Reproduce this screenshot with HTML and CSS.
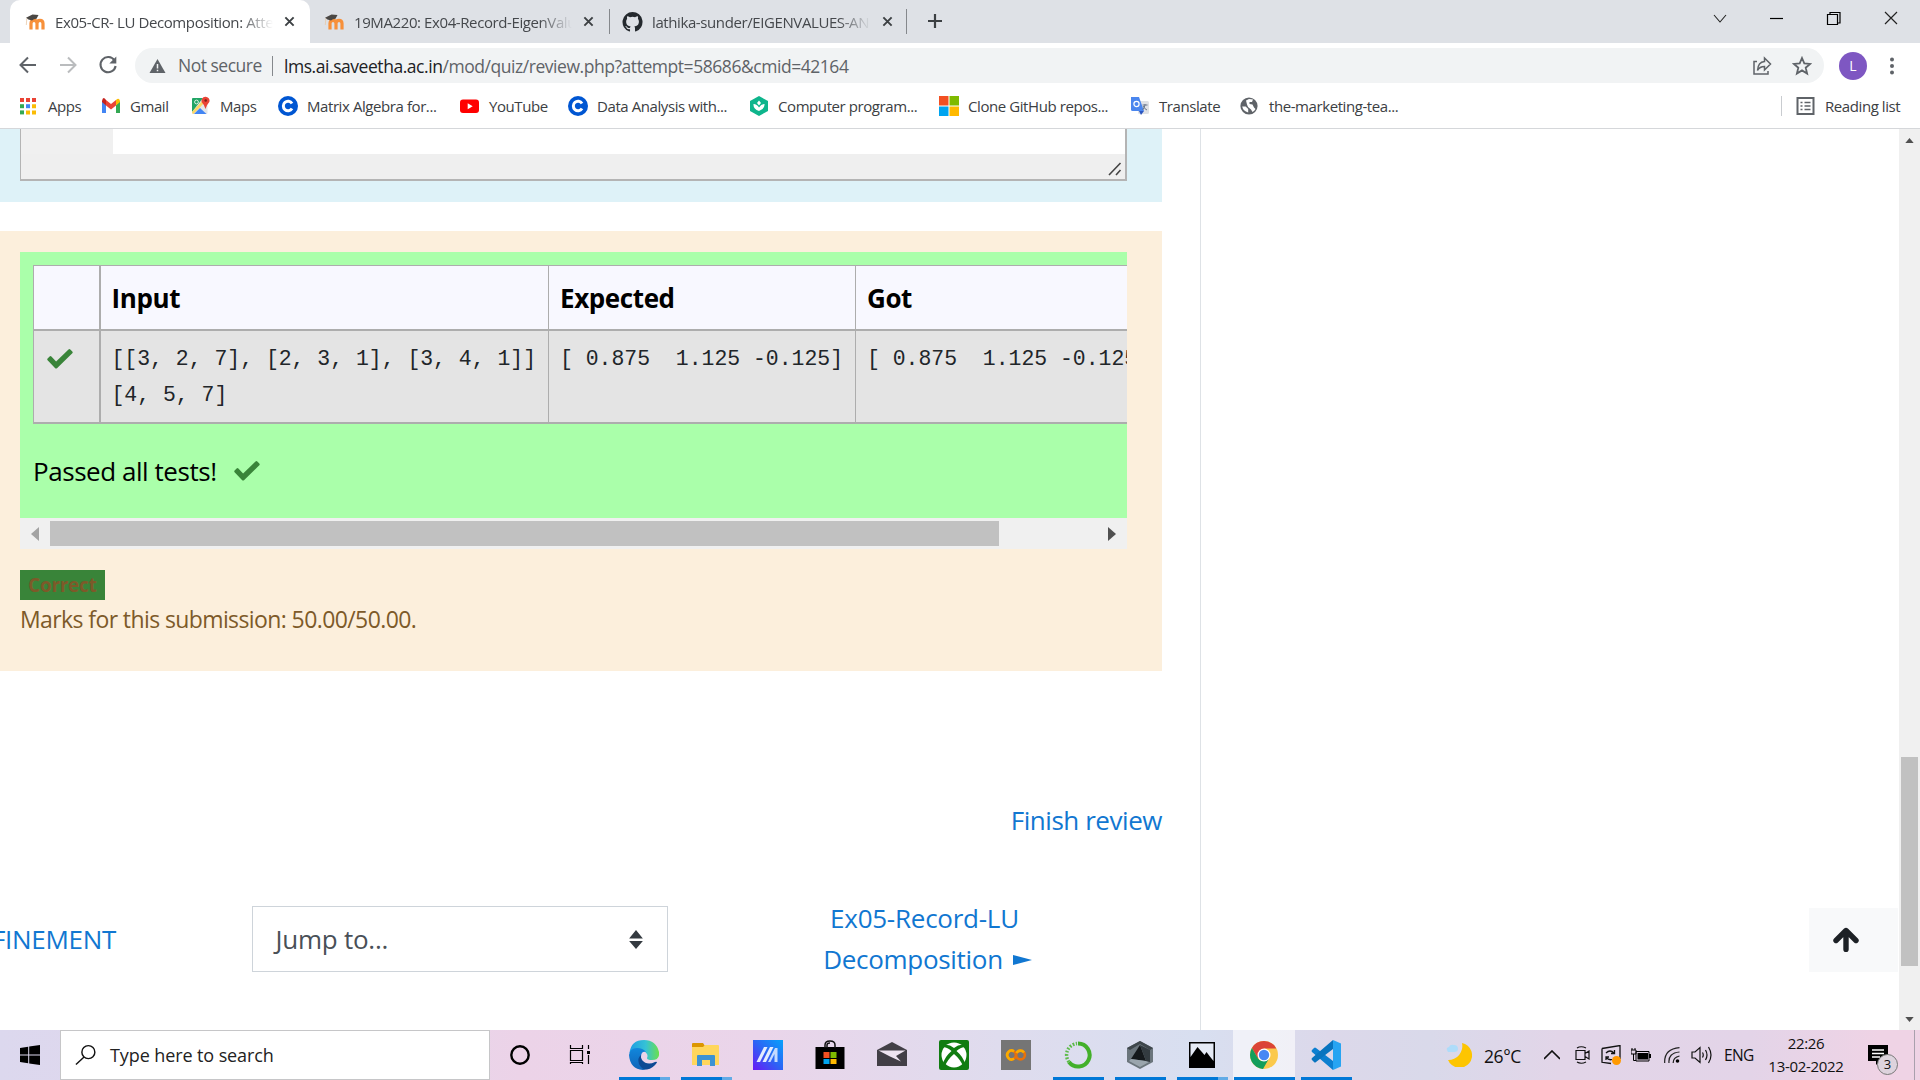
FILE: index.html
```html
<!DOCTYPE html>
<html lang="en">
<head>
<meta charset="utf-8">
<title>Ex05-CR- LU Decomposition: Attempt review</title>
<link rel="stylesheet" href="styles.css">
</head>
<body>
<svg class="defs" aria-hidden="true">
  <symbol id="moodle" viewBox="0 0 20 16"><path d="M6 15.500V9.500q0-3.200 3-3.200t3 3.200v6M12 15.500V9.500q0-3.200 3-3.200t3 3.200v6" fill="none" stroke="#f7903a" stroke-width="3.200"/><path d="M1 3.800 7.500.5l6 .6-2 3.600q-3 0-4.500 1.700L3.400 5.600z" fill="#4a4744"/><path d="M1.800 4.500 1.300 11" stroke="#e9c9a8" stroke-width=".8"/></symbol>
  <symbol id="close" viewBox="0 0 12 12"><path d="M1.500 1.500l9 9M10.500 1.500l-9 9" stroke="#3c4043" stroke-width="2.100"/></symbol>
  <symbol id="coursera" viewBox="0 0 20 20"><circle cx="10" cy="10" r="10" fill="#0056d2"/><path d="M14 7.500A4.700 4.700 0 1 0 14 12.500" fill="none" stroke="#fff" stroke-width="3"/></symbol>
  <symbol id="check" viewBox="0 0 26 20"><path d="M2.600 7.400.600 9.400q-.8.900 0 1.800l7.600 8q.9.800 1.800 0L25.300 4.300q.8-.9 0-1.800l-2-2q-.9-.8-1.800 0L9.100 12.400 4.400 7.400q-.9-.8-1.800 0z" fill="#398439"/></symbol>
</svg>

<header class="tabs">
  <div class="tab tab-active"><svg class="fav"><use href="#moodle"/></svg><span class="tab-title">Ex05-CR- LU Decomposition: Atte</span><svg class="close"><use href="#close"/></svg></div>
  <div class="tab"><svg class="fav"><use href="#moodle"/></svg><span class="tab-title">19MA220: Ex04-Record-EigenValu</span><svg class="close"><use href="#close"/></svg></div>
  <div class="tab tab-ruled"><svg class="fav-git" viewBox="0 0 16 16"><path fill="#24292e" d="M8 0a8 8 0 0 0-2.530 15.590c.4.070.550-.170.550-.380v-1.490c-2.230.480-2.700-.950-2.700-.950-.360-.920-.890-1.170-.890-1.170-.730-.500.050-.490.050-.490.810.060 1.230.830 1.230.830.720 1.230 1.880.870 2.340.670.070-.520.280-.870.510-1.070-1.780-.2-3.640-.890-3.640-3.950 0-.870.310-1.590.820-2.150-.080-.2-.360-1.020.080-2.120 0 0 .670-.210 2.200.820a7.600 7.600 0 0 1 4 0c1.530-1.040 2.200-.820 2.200-.820.440 1.100.160 1.920.080 2.120.510.560.820 1.270.820 2.150 0 3.070-1.870 3.750-3.650 3.950.290.250.540.730.540 1.480v2.190c0 .210.150.460.550.380A8 8 0 0 0 8 0z"/></svg><span class="tab-title">lathika-sunder/EIGENVALUES-AN</span><svg class="close"><use href="#close"/></svg></div>
  <svg class="newtab" viewBox="0 0 16 16"><path d="M8 1v14M1 8h14" stroke="#3c4043" stroke-width="2.200"/></svg>
  <div class="winctl">
    <svg viewBox="0 0 16 16"><path d="M2 5l6 7 6-7" fill="none" stroke="#222" stroke-width="1.100"/></svg>
    <svg viewBox="0 0 16 16"><path d="M1 8.500h13" stroke="#000" stroke-width="1.200"/></svg>
    <svg viewBox="0 0 16 16"><path d="M1.500 4.500h10v10h-10zM4 4V2.500h10V13h-2.500" fill="none" stroke="#000" stroke-width="1.200"/></svg>
    <svg viewBox="0 0 16 16"><path d="M2 2l12 12M14 2L2 14" stroke="#222" stroke-width="1.200"/></svg>
  </div>
</header>

<div class="toolbar">
  <svg class="nav" viewBox="0 0 20 20"><path d="M18 10H3M10 2.500L2.500 10l7.500 7.500" fill="none" stroke="#5f6368" stroke-width="2"/></svg>
  <svg class="nav" viewBox="0 0 20 20"><path d="M2 10h15M10 2.500l7.500 7.500-7.500 7.500" fill="none" stroke="#babcbe" stroke-width="2"/></svg>
  <svg class="nav" viewBox="0 0 20 20"><path d="M16.500 5.500A7.600 7.600 0 1 0 17.600 11" fill="none" stroke="#5f6368" stroke-width="2.100"/><path d="M18.300 1.500v7h-7z" fill="#5f6368"/></svg>
  <div class="omnibox">
    <svg class="warn" viewBox="0 0 16 14"><path d="M8 0l8 14H0z" fill="#5f6368"/><path d="M8 5v4.500M8 10.700v1.600" stroke="#f1f3f4" stroke-width="1.500"/></svg>
    <span class="insecure">Not secure</span><span class="url"><b>lms.ai.saveetha.ac.in</b>/mod/quiz/review.php?attempt=58686&amp;cmid=42164</span>
    <svg class="share" viewBox="0 0 20 20"><path d="M5 5.500H2V18h14v-3M12.500 2l6 6-6 6v-3.500q-5 0-7 4Q6 6 12.500 5.500z" fill="none" stroke="#5f6368" stroke-width="1.500"/></svg>
    <svg class="star" viewBox="0 0 20 20"><path d="M10 2l2.300 5.400 5.900.5-4.500 3.800 1.400 5.800-5.100-3.100-5.100 3.100 1.400-5.800L1.800 7.900l5.900-.5z" fill="none" stroke="#5f6368" stroke-width="1.800"/></svg>
  </div>
  <span class="avatar">L</span>
  <svg class="menu" viewBox="0 0 4 18"><circle cx="2" cy="2.500" r="2"/><circle cx="2" cy="9" r="2"/><circle cx="2" cy="15.500" r="2"/></svg>
</div>

<nav class="bookmarks">
  <a><svg viewBox="0 0 20 20"><path d="M1 2h4v4H1zM7 2h4v4H7zM13 2h4v4h-4z" fill="#ea4335"/><path d="M1 8.200h4v4H1z" fill="#34a853"/><path d="M7 8.200h4v4H7z" fill="#4285f4"/><path d="M13 8.200h4v4h-4zM13 14.400h4v4h-4zM7 14.400h4v4H7z" fill="#fbbc04"/><path d="M1 14.400h4v4H1z" fill="#34a853"/></svg>Apps</a>
  <a><svg viewBox="0 0 20 20"><path d="M1 5v12h4V9z" fill="#4285f4"/><path d="M15 9v8h4V5z" fill="#34a853"/><path d="M1 5v1l4 3.500V4Q2-.5 1 5z" fill="#c5221f"/><path d="M15 4v5.500L19 6V5q-1-4-4-1z" fill="#fbbc04"/><path d="M5 4l5 4 5-4v5.500l-5 4-5-4z" fill="#ea4335"/></svg>Gmail</a>
  <a><svg viewBox="0 0 20 20"><rect x="1" y="2" width="15.500" height="16" rx="1.500" fill="#e4e6e8"/><path d="M1 16V3q0-1 1-1h10z" fill="#21a565"/><path d="M1 16L12 4l3 1L2.500 18Q1 18 1 16z" fill="#fdd663"/><path d="M3 18l6-6 6.500 6z" fill="#4285f4"/><path d="M14.500 13Q13.500 9 11 6.500A4 4 0 1 1 18.300 6Q15.500 9 14.500 13z" fill="#ea4335"/><circle cx="14.700" cy="4.500" r="1.300" fill="#7c1f16"/><circle cx="5.500" cy="6" r="1.900" fill="none" stroke="#d8f0e2" stroke-width="1"/></svg>Maps</a>
  <a><svg><use href="#coursera"/></svg>Matrix Algebra for...</a>
  <a><svg viewBox="0 0 20 20"><rect x="0" y="3.500" width="19" height="13.500" rx="3" fill="#f00"/><path d="M7.700 7.200v6l5-3z" fill="#fff"/></svg>YouTube</a>
  <a><svg><use href="#coursera"/></svg>Data Analysis with...</a>
  <a><svg viewBox="0 0 20 20"><path d="M10 0l9 5v10l-9 5-9-5V5z" fill="#0eb58c"/><path d="M10 15q-6-2-5.500-7 3.500 0 5.500 3.500Q12 8 15.500 8q.5 5-5.500 7zM10 4.500l2 2.500-2 2.500L8 7z" fill="#fff"/></svg>Computer program...</a>
  <a><svg viewBox="0 0 20 20"><path d="M0 0h9.500v9.500H0z" fill="#f25022"/><path d="M10.500 0H20v9.500h-9.500z" fill="#7fba00"/><path d="M0 10.500h9.500V20H0z" fill="#00a4ef"/><path d="M10.500 10.500H20V20h-9.500z" fill="#ffb900"/></svg>Clone GitHub repos...</a>
  <a><svg viewBox="0 0 20 20"><rect x="8" y="5" width="11" height="13" rx="1.500" fill="#dfe1e5"/><path d="M1 1h8l5 14H2.500Q1 15 1 13.500z" fill="#4a86ee"/><path d="M9 15h5l-3 4z" fill="#2b56c0"/><circle cx="6.500" cy="8" r="2.600" fill="none" stroke="#fff" stroke-width="1.200"/><path d="M12.500 9h5M15 8v1q-.5 3-2.500 5M13 10q1.500 3 4 4" fill="none" stroke="#68758a"/></svg>Translate</a>
  <a><svg viewBox="0 0 20 20"><circle cx="9" cy="10" r="8.600" fill="#5f6368"/><path d="M2.200 10.500h3.500l2.500 2.500v3.500Q3 15 2.200 10.500zM6 4.500l3-1.500 4 .5-1 2.500H9.500v2l3 .5 1.500 3 1.500 1.500q-1 2-3 3L11 13.500 8 11l-1-2.500z" fill="#fff"/></svg>the-marketing-tea...</a>
  <a class="reading"><svg viewBox="0 0 20 20"><path d="M1.500 2h16v16h-16z" fill="none" stroke="#5f6368" stroke-width="2"/><path d="M4.500 6.500h2m2 0h6M4.500 10h2m2 0h6M4.500 13.500h2m2 0h6" stroke="#5f6368" stroke-width="1.700"/></svg>Reading list</a>
</nav>

<main class="page">
  <div class="content">
    <section class="formulation">
      <div class="editor"><div class="code"><div class="gutter"></div></div><div class="grip"><svg viewBox="0 0 14 14"><path d="M1 13L12.500 1M8 13l4.500-5" stroke="#444" stroke-width="1.600"/></svg></div></div>
    </section>
    <section class="outcome">
      <div class="results">
        <table>
          <colgroup><col class="c-mark"><col class="c-input"><col class="c-exp"><col class="c-got"></colgroup>
          <tr><th></th><th>Input</th><th>Expected</th><th>Got</th></tr>
          <tr><td><svg class="check"><use href="#check"/></svg></td><td><pre>[[3, 2, 7], [2, 3, 1], [3, 4, 1]]
[4, 5, 7]</pre></td><td><pre>[ 0.875  1.125 -0.125]</pre></td><td><pre>[ 0.875  1.125 -0.125]</pre></td></tr>
        </table>
        <p class="passed">Passed all tests! <svg class="check"><use href="#check"/></svg></p>
      </div>
      <div class="hscroll"><svg viewBox="0 0 8 14"><path d="M8 0v14L0 7z" fill="#a3a3a3"/></svg><div class="hthumb"></div><svg class="right" viewBox="0 0 8 14"><path d="M0 0v14l8-7z" fill="#505050"/></svg></div>
      <span class="badge">Correct</span>
      <div class="marks">Marks for this submission: 50.00/50.00.</div>
    </section>
    <a class="finish">Finish review</a>
    <div class="activity">
      <a class="prev">FINEMENT</a>
      <div class="jump">Jump to...<svg viewBox="0 0 13 18"><path d="M0 8l6.500-8L13 8zM0 10.500h13L6.500 18z" fill="#343a40"/></svg></div>
      <a class="next"><span class="next-top">Ex05-Record-LU</span><span>Decomposition <svg viewBox="0 0 19 10"><path d="M0 0l19 5-19 5z" fill="#1177d1"/></svg></span></a>
    </div>
  </div>
  <aside class="side"><a class="totop"><svg viewBox="0 0 26 24"><path d="M13 22V4M3 13L13 3l10 10" fill="none" stroke="#1d2125" stroke-width="5.400" stroke-linecap="round" stroke-linejoin="round"/></svg></a></aside>
  <div class="vscroll"><svg viewBox="0 0 10 6"><path d="M0 6l5-6 5 6z" fill="#505050"/></svg><div class="vthumb"></div><svg viewBox="0 0 10 6"><path d="M0 0l5 6 5-6z" fill="#505050"/></svg></div>
</main>

<footer class="taskbar">
  <div class="start"><svg viewBox="0 0 20 20"><path d="M0 3l8.200-1.200v7.700H0zM9.200 1.600L20 0v9.500H9.200zM0 10.500h8.200v7.700L0 17zM9.200 10.500H20V20L9.200 18.400z"/></svg></div>
  <div class="search"><svg viewBox="0 0 22 22"><circle cx="14" cy="8" r="6.800" fill="none" stroke="#111" stroke-width="1.500"/><path d="M9.500 13L1 21" stroke="#111" stroke-width="1.500"/></svg>Type here to search</div>
  <div class="apps">
    <div><svg viewBox="0 0 30 30"><circle cx="15" cy="15" r="8.700" fill="none" stroke="#000" stroke-width="2.400"/></svg></div>
    <div><svg viewBox="0 0 30 30"><path d="M3.500 10.500h12v10h-12zM3.500 5v3.500h12V5M3.500 24v-1.500h12V24M21.500 5v4M21.500 15v9" fill="none" stroke="#000" stroke-width="1.200"/><path d="M20 11h3v3h-3z"/></svg></div>
    <div class="run more"><svg viewBox="0 0 30 30"><defs><linearGradient id="e1"><stop stop-color="#1e9de3"/><stop offset=".55" stop-color="#35c2d6"/><stop offset="1" stop-color="#6be04c"/></linearGradient><linearGradient id="e2" x2="0" y2="1"><stop stop-color="#1187dc"/><stop offset="1" stop-color="#1064b8"/></linearGradient></defs><path d="M.5 13Q2 0 15 0q12 0 15 12 1 8-7 8-5 0-5-2 1-2 0-4Q12 5 .500 13z" fill="url(#e1)"/><path d="M0 15Q1 8 8 8q6 0 9 4-5-1-5 5 0 7 7 10.500Q16 30 14 30 1 29 0 15z" fill="url(#e2)"/><path d="M12 15q-4 3-2 9 3 6 8 5.500 6-1 10-7 0-1-2-.5-8 4-13-2-1.500-2-1-5z" fill="#0c4a94"/></svg></div>
    <div class="run more"><svg viewBox="0 0 30 30"><path d="M1 4q0-1 1-1h10l2 3v4H1z" fill="#dc9600"/><path d="M1 7h11l2-2h13q1 0 1 1v19H1z" fill="#ffd65c"/><path d="M6 26V16q0-1 1-1h16q1 0 1 1v10h-5v-6h-8v6z" fill="#3c92d3"/></svg></div>
    <div><svg viewBox="0 0 30 30"><defs><linearGradient id="m1" x1="0" y1="1" x2="1" y2="0"><stop stop-color="#6a18f5"/><stop offset=".5" stop-color="#2c64f5"/><stop offset="1" stop-color="#06a2fb"/></linearGradient></defs><path d="M0 0h30v30H0z" fill="url(#m1)"/><path d="M3.500 22L11 7h3.500L7 22zM9.500 22L17 7h3.500L13 22z" fill="#e3ecff"/><path d="M15 22L22 8h2.500v14h-3v-8l-4 8z" fill="#c3daff"/></svg></div>
    <div><svg viewBox="0 0 30 30"><path d="M.5 7h29v22H.5z"/><path d="M10 8V5q0-4 5-4t5 4v3M12 8V5q0-2 3-2" fill="none" stroke="#111" stroke-width="1.500"/><path d="M8.500 12h6v6h-6z" fill="#f25022"/><path d="M15.500 12h6v6h-6z" fill="#7fba00"/><path d="M8.500 19h6v5h-6z" fill="#00a4ef"/><path d="M15.500 19h6v5h-6z" fill="#ffb900"/></svg></div>
    <div><svg viewBox="0 0 30 30"><path d="M0 10L15 2l15 8v16H0z" fill="#423f46"/><path d="M1.500 10.500h27L19 16l5 5.500-11-5z" fill="#eee4f0"/></svg></div>
    <div><svg viewBox="0 0 30 30"><rect width="30" height="30" rx="2" fill="#107c10"/><circle cx="15" cy="15" r="12.500" fill="#fff"/><path d="M5 5q5-1 10 3 5-4 10-3l1.500 2Q22 7 17.500 11q7 6 8.500 13l-2 2q-3-7-9-12-6 5-9 12l-2-2q1.500-7 8.500-13Q8 7 3.500 7z" fill="#107c10"/></svg></div>
    <div><svg viewBox="0 0 30 30"><path d="M0 0h30v30H0z" fill="#757575"/><circle cx="10.500" cy="15" r="4.400" fill="none" stroke="#e8710a" stroke-width="2.600"/><path d="M13 11.300A4.400 4.400 0 1 0 13 18.700" fill="none" stroke="#f9ab00" stroke-width="2.600"/><circle cx="19.500" cy="15" r="4.400" fill="none" stroke="#e8710a" stroke-width="2.600"/><path d="M15.500 13A4.400 4.400 0 0 1 23 12.500" fill="none" stroke="#f9ab00" stroke-width="2.600"/></svg></div>
    <div class="run"><svg viewBox="0 0 30 30"><path d="M15 3.500A11.500 11.500 0 1 1 6 22" fill="none" stroke="#43b02a" stroke-width="4"/><path d="M6 22A11.500 11.500 0 0 1 14 3.500" fill="none" stroke="#5dbb49" stroke-width="3.500" stroke-dasharray="1.800 1.500"/></svg></div>
    <div class="run"><svg viewBox="0 0 30 30"><path d="M15 1l13 7v14l-13 7-13-7V8z" fill="#6b757c"/><path d="M15 1l13 7-3 2-10-6L5 10 2 8z" fill="#3f474c"/><path d="M15 5L6 19l15 2z" fill="#15191c"/><path d="M6 19l15 2 3 1-9 5L4 21z" fill="#9aa5ad"/><path d="M15 5l6 16 4 1V10z" fill="#333b40"/></svg></div>
    <div class="run more"><svg viewBox="0 0 30 30"><path d="M2 2h26v26H2z"/><path d="M3.500 3.500h23V21l-4-5-3-4-2 3-7-8-7 10z" fill="#e5eaf5"/></svg></div>
    <div class="run current"><svg viewBox="0 0 30 30"><circle cx="15" cy="15" r="14" fill="#fbc94c"/><path d="M15 8.500h12.300A14 14 0 0 0 2.900 8l6 10.500z" fill="#db4437"/><path d="M2.900 8A14 14 0 0 0 14 29l6-10.500q-7 5-11 0z" fill="#139e5b"/><circle cx="15" cy="15" r="6.500" fill="#fff"/><circle cx="15" cy="15" r="5.200" fill="#4688f4"/></svg></div>
    <div class="run"><svg viewBox="0 0 30 30"><path d="M22 0l8 3.500v23L22 30z" fill="#27a4f2"/><path d="M22 30L1 12q-1-1 0-2l2-2q1-1 2 0l17 13z" fill="#0c7fd0"/><path d="M22 0L1 18q-1 1 0 2l2 2q1 1 2 0L22 9z" fill="#0874bf"/></svg></div>
  </div>
  <div class="tray">
    <svg class="moon" viewBox="0 0 26 24"><path d="M16 0A14 14 0 0 1 2 17 12.500 12.500 0 1 0 16 0z" fill="#fdc500"/><path d="M2 9q-3-4 1-5 1-3 5-2 4 0 4 4 0 3-4 3z" fill="#aedcfa"/></svg>
    <span class="temp">26°C</span>
    <svg class="up" viewBox="0 0 16 10"><path d="M0 9l8-8 8 8" fill="none" stroke="#111" stroke-width="1.600"/></svg>
    <svg class="meet" viewBox="0 0 15 18"><path d="M2 2Q6-.5 11 2M2 16q4 2.500 9 0M1 4.500h9v9H1zM10 7.500L14 5v8l-4-2.500" fill="none" stroke="#111" stroke-width="1.200"/></svg>
    <svg class="upd" viewBox="0 0 20 20"><path d="M1 3.500l18-3V14M1 3.500v13.800l9 1.200" fill="none" stroke="#111" stroke-width="1.300"/><path d="M5 8q4-4 8 0M13.500 5v3.500H10M11 14.500q-3 1-6-2M5 15v-3h3" fill="none" stroke="#111" stroke-width="1.300"/><circle cx="15.500" cy="15.500" r="4.500" fill="#f90"/></svg>
    <svg class="bat" viewBox="0 0 20 14"><path d="M5 3.500h13V13H5z" fill="none" stroke="#000"/><path d="M6.500 5H17v6.500H6.500zM18 6h2v4h-2z"/><path d="M0 2h5v4H0zM1 0v2M4 0v2M2.500 6v6.500H5" fill="none" stroke="#000"/></svg>
    <svg class="wifi" viewBox="0 0 16 16"><path d="M.7 16Q0 2 15.500.7M5 16Q4 6 15.500 5M9.200 16Q9 10.500 15.500 9" fill="none" stroke="#222" stroke-width="1.200"/><circle cx="13.500" cy="14" r="1.800"/></svg>
    <svg class="vol" viewBox="0 0 21 18"><path d="M1 6h3l5-4.500v15L4 12H1zM11.500 6.500q1.500 2.500 0 5M14.500 4q3 5 0 10M17.500 1q5 8 0 16" fill="none" stroke="#111" stroke-width="1.200"/></svg>
    <span class="lang">ENG</span>
    <div class="clock">22:26<br>13-02-2022</div>
    <div class="notif"><svg viewBox="0 0 20 20"><path d="M0 0h20v16h-8l-4 4v-4H0z"/><path d="M4 5h12M4 8.500h12M4 12h8" stroke="#fff" stroke-width="1.300"/></svg><span>3</span></div>
  </div>
</footer>
</body>
</html>
```
FILE: styles.css
```css
* { box-sizing: border-box; }
body { margin: 0; width: 1920px; height: 1080px; overflow: hidden; display: flex; flex-direction: column; background: #fff; color: #212529; font-family: "Open Sans", "Noto Sans", sans-serif; }
svg { display: block; flex: none; }
.defs { position: absolute; width: 0; height: 0; }

.tabs { display: flex; height: 43px; background: #dee1e6; padding-left: 10px; }
.tab { display: flex; align-items: center; width: 299px; padding: 0 15px 0 14px; font-size: 15px; letter-spacing: -.4px; color: #45484c; }
.tab-active { width: 300px; padding: 0 15px; background: #fff; border-radius: 10px 10px 0 0; }
.tab-ruled { width: 298px; padding: 0 14px 0 13px; background: linear-gradient(#85888c, #85888c) 0 9px / 1px 25px no-repeat, linear-gradient(#85888c, #85888c) 100% 9px / 1px 25px no-repeat; }
.fav { width: 20px; height: 16px; margin-right: 10px; }
.fav-git { width: 21px; height: 20px; margin-right: 9px; }
.close { width: 11px; height: 11px; margin-left: 11px; }
.tab-title { flex: 1; overflow: hidden; white-space: nowrap; line-height: 40px; -webkit-mask-image: linear-gradient(90deg, #000 85%, transparent); mask-image: linear-gradient(90deg, #000 85%, transparent); }
.newtab { width: 16px; height: 16px; margin: 13px 0 0 20px; }
.winctl { display: flex; gap: 41px; margin: 10px 21px 0 auto; }
.winctl svg { width: 16px; height: 16px; }

.toolbar { display: flex; align-items: center; height: 45px; padding-left: 18px; }
.nav { width: 20px; height: 20px; margin: 0 20px 1px 0; }
.nav + .nav + .nav { margin-right: 17px; }
.omnibox { display: flex; align-items: center; width: 1689px; height: 35px; border-radius: 18px; background: #f1f3f4; padding: 0 12px 0 14px; color: #5f6368; font-size: 17.500px; }
.warn { width: 17px; height: 14px; margin-right: 12px; }
.insecure { width: 95px; height: 20px; line-height: 19px; border-right: 1.500px solid #85888c; margin-right: 11px; letter-spacing: -.5px; }
.url { flex: 1; letter-spacing: -.45px; line-height: 34px; }
.url b { color: #202124; font-weight: 400; }
.share, .star { width: 20px; height: 20px; margin-right: 20px; }
.star { margin-right: 0; }
.avatar { width: 28px; height: 28px; margin-left: 15px; border-radius: 50%; background: #7e57c2; color: #fff; text-align: center; font-size: 14px; line-height: 28px; }
.menu { width: 4px; height: 18px; margin-left: 23px; fill: #5f6368; }

.bookmarks { display: grid; grid-template-columns: 82px 90px 87px 182px 108px 181px 190px 191px 110px 541px auto; height: 41px; padding-left: 19px; border-bottom: 1px solid #d5d7da; color: #3c4043; font-size: 15px; letter-spacing: -.42px; white-space: nowrap; }
.bookmarks a { display: flex; align-items: center; height: 35px; gap: 9px; line-height: 20px; }
.bookmarks svg { width: 20px; height: 20px; }
.bookmarks .reading { background: linear-gradient(#c9ccd0, #c9ccd0) 0 8px / 1px 20px no-repeat; padding-left: 15px; }

.page { display: flex; height: 901px; background: #fff; }
.content { width: 1201px; border-right: 1px solid #dee2e6; padding-right: 38px; display: flex; flex-direction: column; overflow: hidden; }
.formulation { height: 73px; background: #def2f8; padding: 0 35px 0 20px; }
.editor { height: 52px; border: 1px solid #b4b4b4; border-width: 0 2px 2px 1px; background: #fff; }
.code { height: 25px; }
.gutter { width: 92px; height: 25px; background: #f0f0f0; }
.grip { height: 25px; background: #efefef; display: flex; justify-content: flex-end; padding: 8px 3px 0; }
.grip svg { width: 14px; height: 14px; }
.outcome { height: 440px; margin-top: 29px; padding: 21px 35px 0 20px; background: #fcefdc; color: #7d5a29; }
.results { height: 266px; background: #afa; padding: 13px 0 0 13px; overflow: hidden; color: #000; }
table { width: 1162px; table-layout: fixed; border-collapse: separate; border-spacing: 0; border: 1px solid #adadad; border-width: 1px 0 0 1px; }
.c-mark { width: 67px; } .c-input { width: 448px; } .c-exp { width: 307px; } .c-got { width: 339px; }
th, td { border: 1px solid #adadad; border-width: 0 1px 2px 0; padding: 0 11px; text-align: left; }
th:first-child, td:first-child { border-right: 2px solid #adadad; padding-left: 13px; }
th { height: 65px; background: #f8f8ff; font-size: 26px; letter-spacing: -.4px; }
th:nth-child(2), td:nth-child(2) { padding-left: 10.500px; }
td { height: 93px; background: #e4e4e4; vertical-align: top; padding-top: 9.500px; }
td .check { margin-top: 8px; }
pre { margin: 0; font: 21.450px/36px "Liberation Mono", monospace; color: #212529; }
.check { width: 26px; height: 20px; }
.passed { display: flex; align-items: center; gap: 17px; margin: 28px 0 0; font-size: 26px; line-height: 38px; letter-spacing: -.45px; }
.hscroll { display: flex; align-items: center; height: 31px; background: #f0f0f0; padding: 0 11px; }
.hscroll svg { width: 8px; height: 14px; }
.hthumb { width: 949px; height: 25px; margin-left: 11px; background: #c1c1c1; }
.hscroll .right { margin-left: auto; }
.badge { display: block; width: 84.500px; height: 30px; margin-top: 20.500px; background: #398439; color: #7d5a29; font-size: 19px; line-height: 31px; font-weight: 700; text-align: center; letter-spacing: -.3px; }
.marks { font-size: 23px; line-height: 39px; letter-spacing: -.6px; }
a { color: #1177d1; }
.bookmarks a { color: inherit; }
.finish { align-self: flex-end; margin-top: 129px; font-size: 26px; line-height: 40px; letter-spacing: -.45px; }
.activity { display: flex; align-items: center; margin-top: 58px; font-size: 26px; line-height: 41px; white-space: nowrap; }
.prev { width: 116px; display: flex; justify-content: flex-end; letter-spacing: -.3px; }
.jump { width: 416px; height: 66px; margin-left: 135.500px; padding: 0 24px 0 23px; display: flex; align-items: center; justify-content: space-between; border: 1.500px solid #ced4da; color: #495057; letter-spacing: -.25px; }
.jump svg { width: 14px; height: 19px; }
.next { width: 212px; margin-left: 154px; letter-spacing: -.3px; }
.next span { display: flex; align-items: center; justify-content: center; gap: 10px; }
.next .next-top { padding-right: 6px; letter-spacing: -.25px; }
.next svg { width: 19px; height: 10px; }
.side { flex: 1; display: flex; justify-content: flex-end; align-items: flex-end; padding: 0 1px 58px 0; }
.totop { width: 89px; height: 64px; background: #f8f9fa; padding: 19px 0 0 24px; }
.totop svg { width: 26px; height: 25px; }
.vscroll { width: 21px; background: #f0f0f0; display: flex; flex-direction: column; align-items: center; padding: 9px 0 8px; }
.vscroll svg { width: 9px; height: 5px; }
.vthumb { width: 17px; height: 209px; margin: 614px 0 auto; background: #c1c1c1; }

.taskbar { display: flex; height: 50px; background: linear-gradient(90deg, #dcd8ee 0, #e3d6ec 330px, #ecd3e8 520px, #ead5ea 760px, #dfdcee 1000px, #d8dff0 1200px, #dcd8ea 1330px, #d9d9ea 1430px, #e2d5e8 1560px, #e3d4e8 1750px, #efd3e5 1880px); color: #111; }
.start { width: 60px; padding: 15px 20px; }
.start svg { width: 20px; height: 20px; }
.search { width: 430px; background: #fff; border: 1px solid #c6c6c8; display: flex; align-items: center; gap: 14px; padding: 0 0 0 14px; font-size: 18px; letter-spacing: -.1px; color: #222; }
.search svg { width: 21px; height: 22px; }
.apps { display: flex; margin-left: -1px; }
.apps > div { width: 62px; height: 50px; padding: 10px 16px; }
.apps svg { width: 30px; height: 30px; }
.apps .run { background: linear-gradient(#0078d7, #0078d7) 6px 47px / 51px 3px no-repeat; }
.apps .more { background: linear-gradient(90deg, #0078d7 41px, #62abe6 41px) 6px 47px / 51px 3px no-repeat; }
.apps .current { background: linear-gradient(#0078d7, #0078d7) 1px 47px / 61px 3px no-repeat, rgba(255,255,255,.6); }
.tray { flex: 1; display: flex; align-items: center; margin-left: 89px; border-right: 1px solid #a9a0ad; margin-right: 5px; font-size: 17px; }
.moon { width: 26px; height: 24px; }
.temp { width: 60px; padding-left: 12px; font-size: 17.500px; line-height: 26px; padding-top: 1px; letter-spacing: -.4px; }
.up { width: 16px; height: 10px; margin-left: 12px; }
.meet { width: 15px; height: 18px; margin-left: 15px; }
.upd { width: 20px; height: 20px; margin-left: 11px; }
.bat { width: 20px; height: 14px; margin-left: 10px; }
.wifi { width: 16px; height: 16px; margin-left: 13px; }
.vol { width: 21px; height: 18px; margin-left: 11px; }
.lang { width: 29px; margin-left: 12px; font-size: 15.500px; letter-spacing: -.7px; }
.clock { width: 80px; margin-left: 13px; text-align: center; font-size: 15px; line-height: 23px; letter-spacing: -.3px; white-space: nowrap; }
.notif { position: relative; width: 31px; height: 50px; margin-left: 22px; padding-top: 15px; }
.notif svg { width: 20px; height: 20px; }
.notif span { position: absolute; left: 9px; top: 24px; width: 21px; height: 21px; border: 1px solid #777; border-radius: 50%; background: #ddd3dd; font-size: 13px; line-height: 18px; text-align: center; }
```
